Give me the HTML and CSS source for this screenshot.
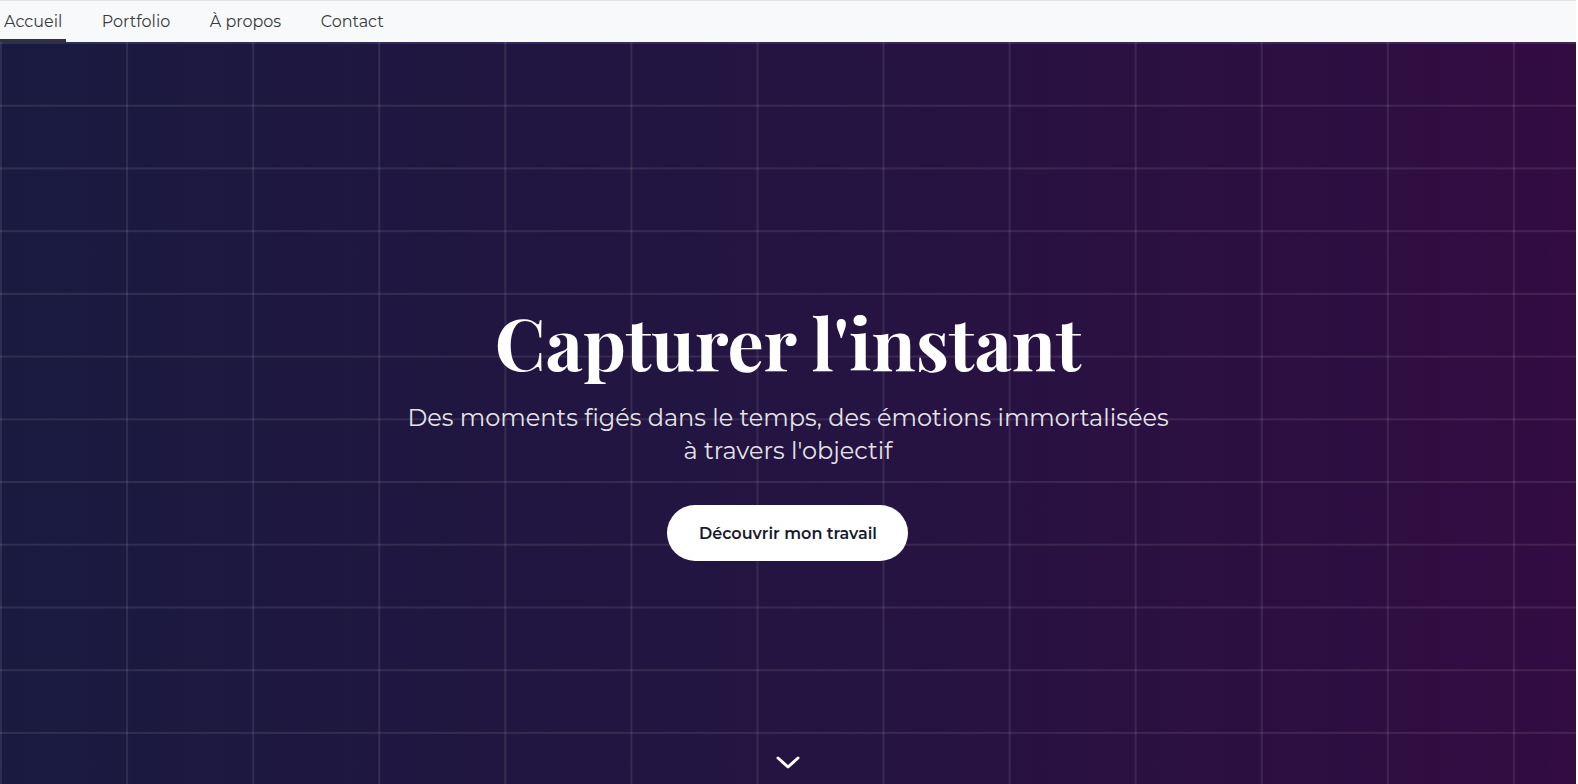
FILE: index.html
```html
<!DOCTYPE html>
<html lang="fr">
<head>
<meta charset="utf-8">
<title>Capturer l'instant</title>
<link rel="stylesheet" href="styles.css">
</head>
<body>
<div class="page">
  <nav class="nav">
    <a class="nav-link active" href="#">Accueil</a>
    <a class="nav-link" href="#">Portfolio</a>
    <a class="nav-link" href="#">À propos</a>
    <a class="nav-link" href="#">Contact</a>
  </nav>
  <section class="hero">
    <div class="hero-content">
      <h1 class="hero-title">Capturer l'instant</h1>
      <p class="hero-sub">Des moments figés dans le temps, des émotions immortalisées<br>à travers l'objectif</p>
      <a class="hero-btn" href="#">Découvrir mon travail</a>
    </div>
    <svg class="scroll-down" width="24" height="14" viewBox="0 0 24 14" aria-hidden="true">
      <path d="M2 2 L12 11 L22 2" fill="none" stroke="#fff" stroke-width="3" stroke-linecap="round" stroke-linejoin="round"/>
    </svg>
  </section>
</div>
</body>
</html>
```

FILE: styles.css
```css
html, body {
  margin: 0;
  padding: 0;
  background: #ffffff;
}
body {
  font-family: "Montserrat", "DejaVu Sans", sans-serif;
  overflow: hidden;
}
.page {
  margin-right: 2px;
}
.nav {
  display: flex;
  align-items: stretch;
  gap: 31.5px;
  height: 41px;
  background: #f8f9fa;
  border-top: 1px solid #e3e4e6;
}
.nav-link {
  display: flex;
  align-items: center;
  padding: 0 4px;
  font-size: 16px;
  color: #3a3a3a;
  text-decoration: none;
  border-bottom: 3px solid transparent;
  padding-top: 2px;
}
.nav-link.active {
  border-bottom-color: #333333;
}
.hero {
  position: relative;
  height: 784px;
  background: linear-gradient(90deg, #1a1a40 0%, #241441 50%, #320c42 100%);
  display: flex;
  justify-content: center;
  align-items: center;
  overflow: hidden;
}
.hero::before {
  content: "";
  position: absolute;
  inset: 0;
  background-image:
    linear-gradient(90deg, rgba(255,255,255,0.09) 2px, transparent 2px),
    linear-gradient(180deg, rgba(255,255,255,0.09) 2px, transparent 2px);
  background-size: 8% 8%;
  pointer-events: none;
}
.hero-content {
  position: relative;
  display: flex;
  flex-direction: column;
  align-items: center;
  text-align: center;
  color: #ffffff;
  margin-top: -5px;
}
.hero-title {
  margin: 0 0 20px;
  font-family: "Playfair Display", "Liberation Serif", serif;
  font-weight: 700;
  font-size: 72px;
  line-height: 1.1;
}
.hero-sub {
  margin: 0 0 38px;
  font-size: 24px;
  line-height: 33px;
  color: rgba(255,255,255,0.9);
}
.hero-btn {
  display: inline-flex;
  align-items: center;
  justify-content: center;
  width: 241px;
  height: 56px;
  box-sizing: border-box;
  border-radius: 28px;
  background: #ffffff;
  color: #1a1a2e;
  font-size: 16px;
  font-weight: 600;
  text-decoration: none;
}
.scroll-down {
  position: absolute;
  left: 50%;
  bottom: 56px;
  transform: translateX(-50%);
}
```
